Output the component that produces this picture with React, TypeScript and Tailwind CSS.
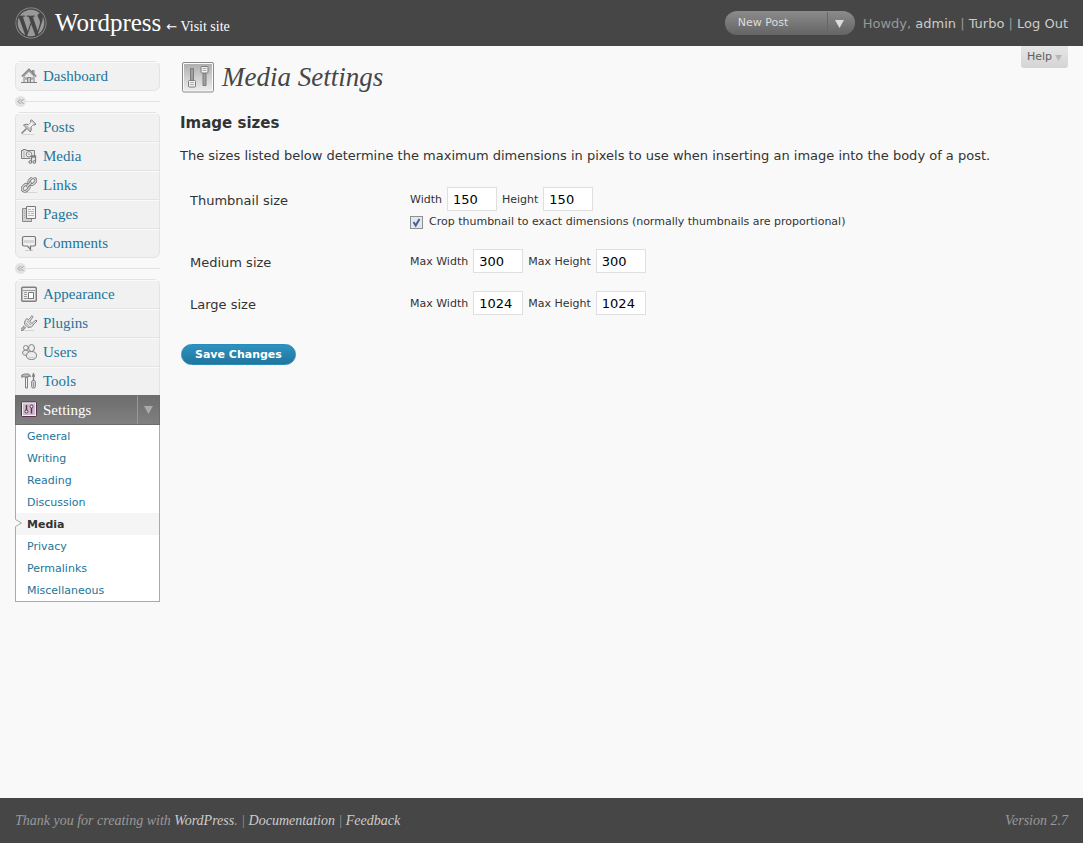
import React from "react";
import { FaWordpress } from "react-icons/fa";

const sans = "font-['DejaVu_Sans',Verdana,sans-serif]";
const serif = "font-['Liberation_Serif',Georgia,serif]";

const stroke = { fill: "none", stroke: "#808080", strokeWidth: 1 } as const;
const iconClass = "mb-[2px] shrink-0";

function HomeIcon() {
  return (
    <svg width="16" height="16" viewBox="0 0 16 16" className={iconClass} aria-hidden="true">
      <path d="M11.500 2.500h1.500v4l-1.500-1.500z" fill="#ddd" stroke="#808080" />
      <path d="M3 8v6.500h10V8L8 3z" fill="#e9e9e9" stroke="#808080" />
      <path d="M.7 8.500 8 1.300l7.300 7.200" {...stroke} strokeWidth={1.500} />
      <path d="M2.500 9 8 3.500 13.500 9" {...stroke} stroke="#bbb" />
      <path d="M4.500 9.500h1v2h-1zM10.500 9.500h1v2h-1z" {...stroke} stroke="#aaa" />
      <path d="M6.500 14.500v-5h3v5z" fill="#ccc" stroke="#808080" />
      <path d="M0 14.500h16" {...stroke} />
    </svg>
  );
}

function PinIcon() {
  return (
    <svg width="16" height="16" viewBox="0 0 16 16" className={iconClass} aria-hidden="true">
      <path d="M1 15.500h12" stroke="#d4d4d4" />
      <path d="M.5 14.500 5.500 9.500" {...stroke} strokeWidth={1.500} />
      <path d="m2.500 6 3-.8 2.200.5L10 3.400 9.500 1.500 10.500.8l4.300 4.300-.8 1-1.800-.4-2.300 2.300.4 2.200-.9 2.800z" fill="#dcdcdc" stroke="#777" strokeLinejoin="round" />
      <path d="M10.500 3 12.500 5 9 8.500 7 6.500z" fill="#f4f4f4" />
      <path d="m5 6.500 4.500 4.500" {...stroke} stroke="#a5a5a5" />
    </svg>
  );
}

function MediaIcon() {
  return (
    <svg width="16" height="16" viewBox="0 0 16 16" className={iconClass} aria-hidden="true">
      <path d="M.5 2.500H2v-1h3v1h8.500v8H.5z" fill="#e6e6e6" stroke="#808080" />
      <path d="M3 3v7" {...stroke} stroke="#aaa" />
      <circle cx="8" cy="6.300" r="2.700" fill="#f8f8f8" stroke="#808080" />
      <circle cx="8" cy="6.300" r="1" fill="#aaa" />
      <path d="M9.500 9h5v5h-5z" fill="#f1f1f1" />
      <path d="M10.500 13.500V8h4v5.500M10.500 9h4" {...stroke} strokeWidth={1.300} />
      <circle cx="9.300" cy="14" r="1.400" fill="#ddd" stroke="#777" />
      <circle cx="13.300" cy="14" r="1.400" fill="#ddd" stroke="#777" />
    </svg>
  );
}

function LinkIcon() {
  return (
    <svg width="16" height="16" viewBox="0 0 16 16" className={iconClass} aria-hidden="true">
      <path d="M4 15.500h12" stroke="#d4d4d4" />
      <g transform="rotate(-45 8 7.500)" fill="none">
        <rect x="-.5" y="4.800" width="7.500" height="5.400" rx="2.700" stroke="#808080" strokeWidth="2.800" />
        <rect x="-.5" y="4.800" width="7.500" height="5.400" rx="2.700" stroke="#e6e6e6" strokeWidth="1" />
        <rect x="9" y="4.800" width="7.500" height="5.400" rx="2.700" stroke="#808080" strokeWidth="2.800" />
        <rect x="9" y="4.800" width="7.500" height="5.400" rx="2.700" stroke="#e6e6e6" strokeWidth="1" />
        <path d="M4.500 7.500h7" stroke="#808080" strokeWidth="2.600" />
        <path d="M5 7.500h6" stroke="#e6e6e6" />
      </g>
    </svg>
  );
}

function PagesIcon() {
  return (
    <svg width="16" height="16" viewBox="0 0 16 16" className={iconClass} aria-hidden="true">
      <path d="M1.500 2.500h9v13h-9z" fill="#d0d0d0" stroke="#8a8a8a" />
      <path d="M5.500.5h9v12h-9z" fill="#f4f4f4" stroke="#777" />
      <path d="M7 3.500h3M11 3.500h2M7 5.500h6M7 7.500h2M10 7.500h3M7 9.500h6" stroke="#b5b5b5" />
      <path d="M3 5.500h1M3 7.500h1M3 9.500h1M3 11.500h1" stroke="#aaa" />
    </svg>
  );
}

function CommentIcon() {
  return (
    <svg width="16" height="16" viewBox="0 0 16 16" className={iconClass} aria-hidden="true">
      <path d="M4 15.500h8" stroke="#ccc" />
      <path d="M3 1.500h10q1.500 0 1.500 1.500v6.500q0 1.500-1.500 1.500h-3.500v3.500L6.500 11H3q-1.500 0-1.500-1.500V3q0-1.500 1.500-1.500z" fill="#f1f1f1" stroke="#777" strokeWidth="1.200" />
      <path d="M3 5h10v3H3z" fill="#d6d6d6" />
    </svg>
  );
}

function AppearanceIcon() {
  return (
    <svg width="16" height="16" viewBox="0 0 16 16" className={iconClass} aria-hidden="true">
      <rect x=".75" y="1.250" width="14.500" height="14" rx="1" fill="#ececec" stroke="#808080" strokeWidth="1.500" />
      <path d="M2 4.500h12" stroke="#999" />
      <path d="M3 6.500h3M3 8.500h3M3 10.500h3M3 12.500h10" stroke="#999" />
      <path d="M7.500 6.500h5v6h-5z" fill="#fff" stroke="#777" />
    </svg>
  );
}

function PluginIcon() {
  return (
    <svg width="16" height="16" viewBox="0 0 16 16" className={iconClass} aria-hidden="true">
      <path d="M2 15.500h11" stroke="#d4d4d4" />
      <path d="M0 15.500 4 11.500" stroke="#808080" strokeWidth="3" />
      <path d="m.5 15 4-4" stroke="#e4e4e4" />
      <path d="M6 3.500 12.500 10q-1.500 2.500-5.500 2.500L3.500 9Q3.500 5 6 3.500z" fill="#e2e2e2" stroke="#808080" />
      <path d="M7.500 4.800 11 .7l1 1-3 4.500M11 8.300 15 5l1 1-4 4" fill="#eee" stroke="#808080" />
      <path d="m6 6 4 4M5 8l3 3" stroke="#aaa" />
    </svg>
  );
}

function UsersIcon() {
  return (
    <svg width="16" height="16" viewBox="0 0 16 16" className={iconClass} aria-hidden="true">
      <path d="M1.500 9Q1.500 6 4.500 6T8 9t-3 2.500T1.500 9z" fill="#e9e9e9" stroke="#888" />
      <circle cx="4.800" cy="3.800" r="2.300" fill="#f1f1f1" stroke="#888" />
      <ellipse cx="10.500" cy="4" rx="3" ry="3.500" fill="#ececec" stroke="#808080" />
      <path d="M5.500 11.800q0-4.300 5-4.300t5 4.300q0 3.700-5 3.700t-5-3.700z" fill="#ececec" stroke="#808080" />
      <path d="M7.500 13.500h6" stroke="#ccc" />
    </svg>
  );
}

function ToolsIcon() {
  return (
    <svg width="16" height="16" viewBox="0 0 16 16" className={iconClass} aria-hidden="true">
      <path d="M.8 4.500V2l3-1h4l2 2.500-2.500-.5v1H4L2 3.500z" fill="#bbb" stroke="#808080" />
      <path d="M4.500 4.500h2v10.500h-2z" fill="#f1f1f1" stroke="#808080" />
      <path d="M12.500 7V4l-.8-1 .8-2.500.8 2.500-.8 1" fill="#999" stroke="#808080" strokeWidth="1.300" />
      <rect x="10.700" y="7.500" width="3.600" height="7.500" rx="1.400" fill="#e6e6e6" stroke="#777" />
      <path d="M12.500 9v5" stroke="#999" />
    </svg>
  );
}

function SettingsIcon() {
  return (
    <svg width="16" height="16" viewBox="0 0 16 16" className={iconClass} aria-hidden="true">
      <rect x=".5" y="1" width="15" height="14.500" rx="1" fill="#cdb9cb" stroke="#54304f" />
      <rect x="1.500" y="2" width="13" height="12.500" fill="none" stroke="#f6eef5" />
      <path d="M5.500 4v6M10.500 7v5.500" stroke="#54304f" strokeWidth="1.400" />
      <circle cx="5.500" cy="10.500" r="1.500" fill="#f6eef5" stroke="#54304f" />
      <circle cx="10.500" cy="5.500" r="1.500" fill="#f6eef5" stroke="#54304f" />
    </svg>
  );
}

function SettingsLargeIcon() {
  return (
    <svg width="32" height="32" viewBox="0 0 32 32" className="shrink-0" aria-hidden="true">
      <defs>
        <linearGradient id="panel" x1="0" y1="0" x2="0" y2="1">
          <stop offset="0" stopColor="#b0b0b0" />
          <stop offset="1" stopColor="#ececec" />
        </linearGradient>
      </defs>
      <rect x=".5" y="1.500" width="31" height="29.500" rx="1.500" fill="#fafafa" stroke="#8a8a8a" />
      <rect x="2" y="3" width="28" height="26.500" fill="url(#panel)" />
      <path d="M8.500 7.500h3v12h-3zM21 12.500h3v12h-3z" fill="#a0a0a0" stroke="#7c7c7c" />
      <rect x="6.500" y="19.500" width="7" height="6.500" rx="1" fill="#f1f1f1" stroke="#7c7c7c" />
      <rect x="19" y="5.500" width="7" height="6.500" rx="1" fill="#f1f1f1" stroke="#7c7c7c" />
      <path d="M8 21.500h4M8 23.500h4M20.500 7.500h4M20.500 9.500h4" stroke="#aaa" />
    </svg>
  );
}

function Triangle({ className }: { className: string }) {
  return (
    <svg width="9" height="8" viewBox="0 0 9 8" className={className} aria-hidden="true">
      <path d="M0 0h9L4.500 8z" fill="currentColor" />
    </svg>
  );
}

type Item = { label: string; icon: () => React.JSX.Element };

const contentItems: Item[] = [
  { label: "Posts", icon: PinIcon },
  { label: "Media", icon: MediaIcon },
  { label: "Links", icon: LinkIcon },
  { label: "Pages", icon: PagesIcon },
  { label: "Comments", icon: CommentIcon },
];

const adminItems: Item[] = [
  { label: "Appearance", icon: AppearanceIcon },
  { label: "Plugins", icon: PluginIcon },
  { label: "Users", icon: UsersIcon },
  { label: "Tools", icon: ToolsIcon },
];

const settingsPages = ["General", "Writing", "Reading", "Discussion", "Media", "Privacy", "Permalinks", "Miscellaneous"];

function MenuItem({ label, icon: Icon }: Item) {
  return (
    <li className="border-b border-[#e3e3e3] last:border-b-0">
      <a href="#" className={`flex h-7 items-center gap-[6px] border-t border-[#fafafa] pl-[5px] text-[15px] text-[#21759b] ${serif}`}>
        <Icon />
        {label}
      </a>
    </li>
  );
}

function Separator() {
  return (
    <div className="flex h-[21px] items-center">
      <button type="button" aria-label="Collapse menu" className="flex size-[11px] items-center justify-center rounded-full bg-[#e3e3e3]">
        <svg width="7" height="7" viewBox="0 0 7 7" aria-hidden="true">
          <path d="M3.500 1 1 3.500 3.500 6M6.500 1 4 3.500 6.500 6" fill="none" stroke="#999" />
        </svg>
      </button>
      <span className="h-px flex-1 bg-[#e3e3e3]" />
    </div>
  );
}

function SizeField({ id, label, value }: { id: string; label: string; value: string }) {
  return (
    <>
      <label htmlFor={id} className="mr-[5px] pt-[2px]">{label}</label>
      <input id={id} type="text" defaultValue={value} className="mr-[5px] h-6 w-[50px] border border-[#dfdfdf] bg-white px-[5px] text-[13px] text-black outline-none" />
    </>
  );
}

export default function App() {
  return (
    <div className={`flex min-h-screen flex-col bg-[#f9f9f9] text-[#333] ${sans}`}>
      <header className="flex h-[46px] shrink-0 items-center justify-between bg-[#464646] px-[15px]">
        <div className={`flex items-center text-white ${serif}`}>
          <FaWordpress className="mr-2 size-8 text-[#999]" aria-hidden="true" />
          <h1 className="flex items-baseline gap-[5px] text-[25px]">
            <a href="#">Wordpress</a>
            <a href="#" className="text-[13px]">
              <span className={sans}>←</span> <span className="text-[14px]">Visit site</span>
            </a>
          </h1>
        </div>
        <div className="flex items-center text-[13px] text-[#999]">
          <div className="mr-2 flex h-6 w-[130px] overflow-hidden rounded-full border-t border-[#8a8a8a] bg-linear-to-b from-[#8a8a8a] to-[#646464] text-[11px] text-[#ddd]">
            <a href="#" className="flex flex-1 items-center pl-[13px]">New Post</a>
            <button type="button" aria-label="More actions" className="flex w-7 items-center justify-start border-l border-[#666] pl-[7px]">
              <Triangle className="text-[#ddd]" />
            </button>
          </div>
          <p className="pt-[2px] whitespace-pre">
            Howdy, <a href="#" className="text-[#ccc]">admin</a> | <a href="#" className="text-[#ccc]">Turbo</a> | <a href="#" className="text-[#ccc]">Log Out</a>
          </p>
        </div>
      </header>

      <div className="flex flex-1 items-start px-[15px]">
        <nav aria-label="Main menu" className="w-[145px] shrink-0 pt-[15px]">
          <ul className="rounded-md border border-[#e3e3e3] bg-[#f1f1f1]">
            <MenuItem label="Dashboard" icon={HomeIcon} />
          </ul>
          <Separator />
          <ul className="rounded-md border border-[#e3e3e3] bg-[#f1f1f1]">
            {contentItems.map((item) => <MenuItem key={item.label} {...item} />)}
          </ul>
          <Separator />
          <ul className="rounded-t-md border border-b-0 border-[#e3e3e3] bg-[#f1f1f1]">
            {adminItems.map((item) => <MenuItem key={item.label} {...item} />)}
          </ul>
          <div className="flex h-[30px] border border-[#6d6d6d] bg-linear-to-b from-[#6d6d6d] to-[#808080]">
            <a href="#" className={`flex flex-1 items-center gap-[6px] pl-[5px] text-[15px] text-white ${serif}`}>
              <SettingsIcon />
              Settings
            </a>
            <button type="button" aria-label="Toggle settings menu" className="flex w-[22px] items-center justify-center border-l border-[#999]">
              <Triangle className="text-[#aaa]" />
            </button>
          </div>
          <ul className="border border-t-0 border-[#aaa] bg-white">
            {settingsPages.map((page) => (
              <li key={page} className={page === "Media" ? "relative bg-[#f5f5f5] font-bold text-[#333]" : "text-[#21759b]"}>
                {page === "Media" && (
                  <svg width="8" height="8" viewBox="0 0 8 8" className="absolute top-[6px] -left-px" aria-hidden="true">
                    <path d="M0 0v8l6-4z" fill="#f9f9f9" />
                    <path d="M.5.5l6 3.500-6 3.500" fill="none" stroke="#aaa" />
                  </svg>
                )}
                <a href="#" className="flex h-[22px] items-center pt-[2px] pl-[11px] text-[11px]">{page}</a>
              </li>
            ))}
          </ul>
        </nav>

        <main className="relative ml-5 flex-1">
          <button type="button" className="absolute top-0 right-0 flex h-[22px] items-center gap-[3px] rounded-b-[3px] bg-linear-to-b from-[#e6e6e6] to-[#d4d4d4] px-[6px] pt-px text-[11px] text-[#606060]">
            Help
            <Triangle className="w-[7px] text-[#b8b8b8]" />
          </button>
          <h2 className={`mt-[15px] flex h-8 items-center gap-2 pl-[2px] text-[27px] text-[#464646] italic ${serif}`}>
            <SettingsLargeIcon />
            Media Settings
          </h2>
          <h3 className="mt-5 text-[15px] leading-5 font-bold">Image sizes</h3>
          <p className="mt-[13px] text-[13px] leading-5">
            The sizes listed below determine the maximum dimensions in pixels to use when inserting an image into the body of a post.
          </p>
          <form onSubmit={(e) => e.preventDefault()}>
            <table className="mt-3 w-full text-left text-[11px]">
              <tbody>
                <tr>
                  <th scope="row" className="w-[220px] px-[10px] pt-[11px] pb-[7px] align-top text-[13px] leading-6 font-normal">Thumbnail size</th>
                  <td className="px-[10px] py-[9px] align-top">
                    <div className="flex h-6 items-center">
                      <SizeField id="thumb-w" label="Width" value="150" />
                      <SizeField id="thumb-h" label="Height" value="150" />
                    </div>
                    <label className="flex h-5 items-center gap-[6px] pt-[2px]">
                      <span className="relative flex size-[13px]">
                        <input type="checkbox" defaultChecked className="peer size-[13px] appearance-none border border-[#8e8f8f] bg-[#e4e7ec]" />
                        <svg width="13" height="13" viewBox="0 0 13 13" className="pointer-events-none absolute inset-0 hidden peer-checked:block" aria-hidden="true">
                          <path d="m3.500 6 2.200 3.500L9.500 3" fill="none" stroke="#4b5f97" strokeWidth="2" />
                        </svg>
                      </span>
                      Crop thumbnail to exact dimensions (normally thumbnails are proportional)
                    </label>
                  </td>
                </tr>
                {[
                  { name: "Medium size", id: "medium", value: "300" },
                  { name: "Large size", id: "large", value: "1024" },
                ].map((row) => (
                  <tr key={row.id}>
                    <th scope="row" className="px-[10px] pt-[11px] pb-[7px] align-top text-[13px] leading-6 font-normal">{row.name}</th>
                    <td className="px-[10px] py-[9px] align-top">
                      <div className="flex h-6 items-center">
                        <SizeField id={`${row.id}-w`} label="Max Width" value={row.value} />
                        <SizeField id={`${row.id}-h`} label="Max Height" value={row.value} />
                      </div>
                    </td>
                  </tr>
                ))}
              </tbody>
            </table>
            <button type="submit" className="mt-5 ml-px h-[21px] rounded-full border border-[#298cba] bg-linear-to-b from-[#2e93c1] to-[#21759b] px-[13px] text-[11px] leading-none font-bold text-white">
              Save Changes
            </button>
          </form>
        </main>
      </div>

      <footer className={`flex h-[45px] shrink-0 items-center justify-between bg-[#464646] px-[15px] text-[14px] text-[#999] italic ${serif}`}>
        <p>
          Thank you for creating with <a href="#" className="text-[#ccc]">WordPress</a>. | <a href="#" className="text-[#ccc]">Documentation</a> | <a href="#" className="text-[#ccc]">Feedback</a>
        </p>
        <p>Version 2.7</p>
      </footer>
    </div>
  );
}
